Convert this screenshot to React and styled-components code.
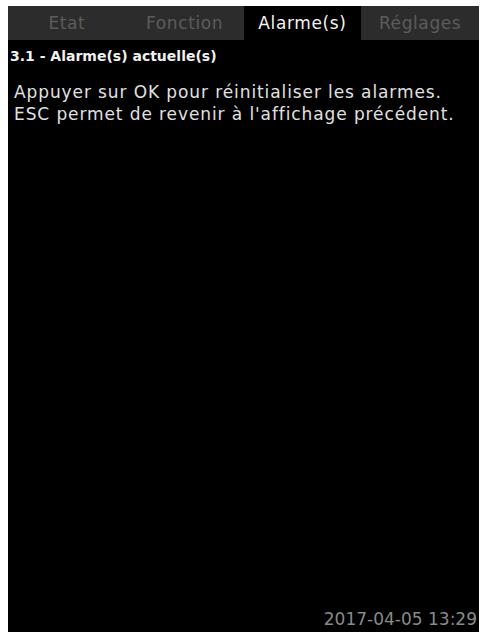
import React from 'react'
import styled, { createGlobalStyle } from 'styled-components'

const Global = createGlobalStyle`
  html, body {
    margin: 0;
    padding: 0;
    background: #ffffff;
  }
`;

const Screen = styled.div`
  margin: 6px 0 0 8px;
  width: 471px;
  height: 626px;
  background: #000;
  display: flex;
  flex-direction: column;
  font-family: "DejaVu Sans", sans-serif;
  color: #e0e0e0;
`;

const Tabs = styled.div`
  display: grid;
  grid-template-columns: repeat(4, 1fr);
  height: 34px;
  background: #2c2c2c;
`;

const Tab = styled.div`
  display: flex;
  align-items: center;
  justify-content: center;
  font-size: 17px;
  letter-spacing: 0.6px;
  background: ${p => (p.active ? '#000' : '#2c2c2c')};
  color: ${p => (p.active ? '#f2f2f2' : '#5c5c5c')};
`;

const Title = styled.div`
  padding: 8px 0 0 2px;
  font-size: 14px;
  font-weight: bold;
  color: #f0f0f0;
`;

const Message = styled.div`
  padding: 17px 0 0 6px;
  font-size: 17px;
  letter-spacing: 0.9px;
  line-height: 22px;
  flex: 1;
`;

const Clock = styled.div`
  align-self: flex-end;
  padding: 0 2px 3px 0;
  font-size: 17px;
  color: #8a8a8a;
`;

const tabs = ['Etat', 'Fonction', 'Alarme(s)', 'Réglages'];

export default function App() {
  return (
    <>
      <Global />
      <Screen>
        <Tabs>
          {tabs.map(t => (
            <Tab key={t} active={t === 'Alarme(s)'}>{t}</Tab>
          ))}
        </Tabs>
        <Title>3.1 - Alarme(s) actuelle(s)</Title>
        <Message>
          Appuyer sur OK pour réinitialiser les alarmes.
          <br />
          ESC permet de revenir à l'affichage précédent.
        </Message>
        <Clock>2017-04-05 13:29</Clock>
      </Screen>
    </>
  );
}
